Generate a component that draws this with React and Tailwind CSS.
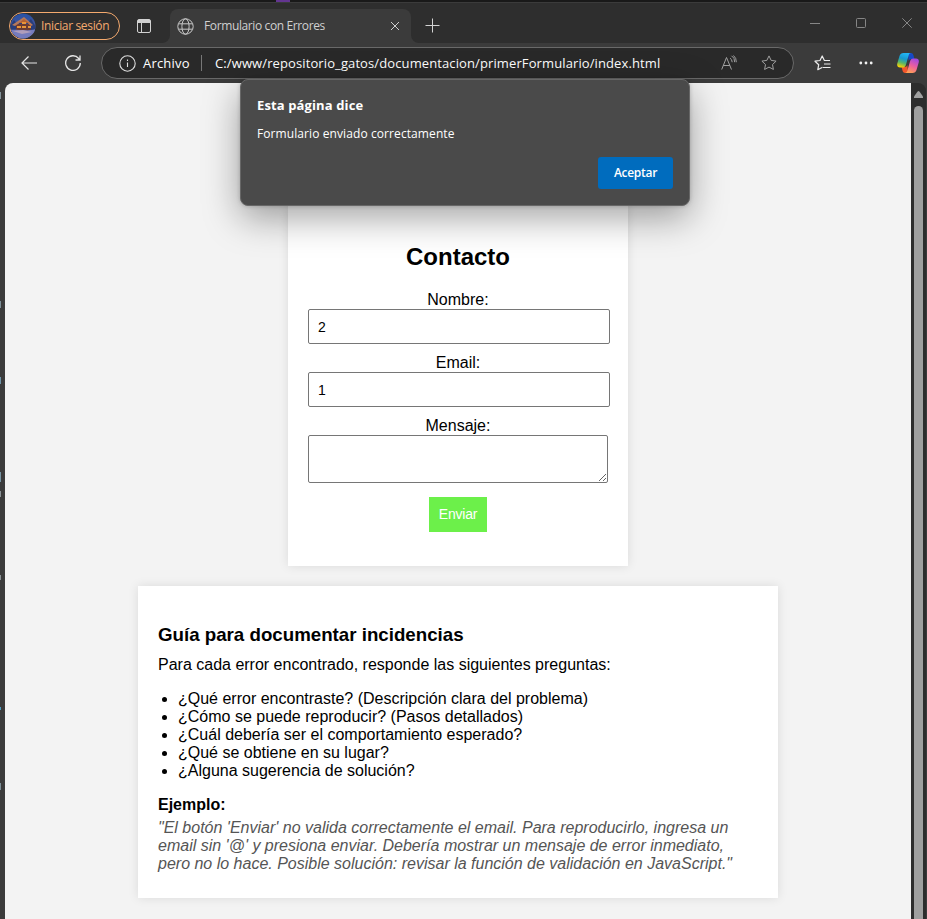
const ui = "font-['Open_Sans','Noto_Sans',sans-serif]";

function Avatar() {
  return (
    <svg viewBox="0 0 26 26" className="h-[26px] w-[26px] shrink-0">
      <defs>
        <clipPath id="av"><circle cx="13" cy="13" r="12.5" /></clipPath>
        <linearGradient id="sky" x1="0" y1="0" x2="0" y2="1">
          <stop offset="0" stopColor="#2451a8" />
          <stop offset="0.55" stopColor="#4a5696" />
          <stop offset="0.7" stopColor="#8287ba" />
          <stop offset="1" stopColor="#595faa" />
        </linearGradient>
      </defs>
      <g clipPath="url(#av)">
        <rect width="26" height="26" fill="url(#sky)" />
        <path d="M0 13 4 7l4 5 3-6 5 5 5-5 5 8v5H0z" fill="#283d7b" />
        <path d="M6 11h15v7H6z" fill="#6a3a34" />
        <path d="M2 12 14 4l9 8-2 1-7-6-9 6z" fill="#b5785c" />
        <path d="m9 10 5-4 5 4z" fill="#b8612f" />
        <path d="M7 13h4v2H7zM12 9h4v2h-4zM12 13h4v2h-4zM18 13h3v2h-3z" fill="#e8953b" />
        <path d="M0 17c7-1 15 2 26-1v10H0z" fill="#757bbd" />
        <path d="m3 18 10-1 9 2-10 2z" fill="#b09dbb" />
      </g>
    </svg>
  );
}

function Copilot() {
  return (
    <svg viewBox="0 0 22 20" className="h-5 w-[22px]">
      <defs>
        <linearGradient id="cl" x1="0.6" y1="0" x2="0.3" y2="1">
          <stop offset="0" stopColor="#23b7f5" />
          <stop offset="0.4" stopColor="#1799cf" />
          <stop offset="0.68" stopColor="#55b56a" />
          <stop offset="1" stopColor="#ffd400" />
        </linearGradient>
        <linearGradient id="cr" x1="0.7" y1="0" x2="0.3" y2="1">
          <stop offset="0" stopColor="#a248e2" />
          <stop offset="0.5" stopColor="#ed609c" />
          <stop offset="1" stopColor="#ffa253" />
        </linearGradient>
      </defs>
      <path d="M11 0h3c1.6 0 2.1 1 2.5 2.4L17.5 6h-3.2c-1.6 0-2.3.7-2.7 2z" fill="#1749c6" />
      <path d="M11 20H8.2c-1.7 0-2.3-1-2.7-2.4L4.5 14h3.2c1.5 0 2.3-.7 2.7-2z" fill="#f2562b" />
      <path d="M6.4 0H14c-1.3 0-1.9.9-2.3 2.2L9 11.4C8.500 13.400 7.500 14.500 5.700 14.500H3C.7 14.500-.3 12.900.3 10.600L2.500 3C3.100 1 4.400 0 6.400 0z" fill="url(#cl)" />
      <path d="M15.600 20H8c1.300 0 1.900-.9 2.300-2.200L13 8.600c.5-2 1.500-3.100 3.300-3.100H19c2.300 0 3.300 1.600 2.700 3.900L19.500 17c-.6 2-1.900 3-3.900 3z" fill="url(#cr)" />
    </svg>
  );
}

const starPath = "M8 .9l2.150 4.500 4.950.7-3.600 3.450.9 4.900L8 12.100l-4.400 2.350.9-4.900L.9 6.100l4.950-.7z";

function TabBar() {
  return (
    <div className="flex h-10 shrink-0 items-start bg-[#2e2e2e]">
      <div className="ml-[9px] mt-[9px] flex h-7 w-[111px] items-center rounded-full border border-[#f5aa6e]">
        <Avatar />
        <span className="ml-[5px] whitespace-nowrap text-[12px] tracking-[-0.34px] text-[#f5aa6e]">Iniciar sesión</span>
      </div>
      <svg viewBox="0 0 14 14" className="ml-[17px] mt-4 h-[14px] w-[14px]" fill="none" stroke="#d2d2d2">
        <rect x="0.5" y="0.5" width="13" height="13" rx="1.500" />
        <path d="M1 1.500h12M1 3.500h12M1 2.500h12M4.500 4v9" />
      </svg>
      <svg viewBox="0 0 8 8" className="ml-[11px] h-2 w-2 self-end"><path d="M8 0v8H0a8 8 0 0 0 8-8z" fill="#3b3b3b" /></svg>
      <div className="flex h-[34px] w-[241px] items-center self-end rounded-t-lg bg-[#3b3b3b] pl-[7px]">
        <svg viewBox="0 0 17 17" className="h-[17px] w-[17px]" fill="none" stroke="#c9c9c9">
          <circle cx="8.500" cy="8.500" r="7.700" />
          <ellipse cx="8.500" cy="8.500" rx="3.600" ry="7.700" />
          <path d="M1.500 5.800h14M1.500 11.200h14" />
        </svg>
        <span className="ml-[10px] whitespace-nowrap text-[12px] tracking-[-0.38px] text-[#d0d0d0]">Formulario con Errores</span>
        <svg viewBox="0 0 10 10" className="ml-auto mr-[11px] h-[10px] w-[10px]" stroke="#cfcfcf"><path d="m1 1 8 8m0-8L1 9" /></svg>
      </div>
      <svg viewBox="0 0 8 8" className="h-2 w-2 self-end"><path d="M0 0v8h8a8 8 0 0 1-8-8z" fill="#3b3b3b" /></svg>
      <svg viewBox="0 0 15 15" className="ml-[6px] mt-[15px] h-[15px] w-[15px]" stroke="#d3d3d3"><path d="M7.500.5v14M.5 7.500h14" /></svg>
      <div className="ml-auto mr-[15px] mt-[15px] flex items-center gap-9 text-[#868686]">
        <svg viewBox="0 0 10 10" className="h-[10px] w-[10px]" stroke="currentColor"><path d="M0 5.500h10" /></svg>
        <svg viewBox="0 0 10 10" className="h-[10px] w-[10px]" stroke="currentColor" fill="none"><rect x=".5" y=".5" width="9" height="9" rx="1" /></svg>
        <svg viewBox="0 0 10 10" className="h-[10px] w-[10px]" stroke="currentColor"><path d="m.3.3 9.400 9.400m0-9.400L.3 9.700" /></svg>
      </div>
    </div>
  );
}

function Toolbar() {
  return (
    <div className="flex h-10 shrink-0 items-center bg-[#3b3b3b]">
      <svg viewBox="0 0 16 14" className="ml-[21px] h-[14px] w-4" fill="none" stroke="#e5e5e5" strokeWidth="1.200"><path d="M7.500.5 1 7l6.500 6.500M1 7h15" /></svg>
      <svg viewBox="0 0 16 16" className="ml-7 h-4 w-4" fill="none" stroke="#e5e5e5" strokeWidth="1.300"><path d="M15.300 8A7.300 7.300 0 1 1 13.700 3.500L15 5M15 .5V5h-4.500" /></svg>
      <div className="ml-5 flex h-8 w-[693px] items-center rounded-full border border-[#696969] bg-[#292929] pl-[17px] pr-4">
        <svg viewBox="0 0 17 17" className="h-[17px] w-[17px]" fill="none" stroke="#dedede" strokeWidth="1.100"><circle cx="8.500" cy="8.500" r="7.700" /><path d="M8.500 7.500v4.500M8.500 4.500v1.500" /></svg>
        <span className="ml-[7px] w-[47px] whitespace-nowrap pt-px text-[13px] tracking-[0.2px] text-white">Archivo</span>
        <span className="ml-[11px] h-4 w-px bg-[#777]" />
        <span className="ml-[13px] whitespace-nowrap pt-px text-[13px] tracking-[0.11px] text-white">C:/www/repositorio_gatos/documentacion/primerFormulario/index.html</span>
        <svg viewBox="0 0 17 15" className="mb-0.5 ml-auto h-[15px] w-[17px]" fill="none" stroke="#a0a0a0">
          <path d="m.7 14.500 4.800-12 5 12M2.200 10.500h6.700M9 3.200q2 1 2.200 4M10.500.8q3.300 1.700 3.200 6.400M12.500.5q3 2.500 2.800 6.700" />
        </svg>
        <svg viewBox="0 0 16 16" className="ml-[23px] h-4 w-4" fill="none" stroke="#a0a0a0"><path d={starPath} strokeLinejoin="round" /></svg>
      </div>
      <svg viewBox="0 0 17 16" className="ml-5 h-4 w-[17px]" fill="none" stroke="#ececec" strokeWidth="1.200" strokeLinejoin="round">
        <path d="M8.500 12.200 3.800 14.700l.9-5L1 6.200l5-.7L8.200 1l2.200 4.500H16M10 9h6.500M9 12.500h7.500" />
      </svg>
      <svg viewBox="0 0 14 4" className="ml-7 h-1 w-[14px]" fill="#f1f1f1"><circle cx="1.800" cy="2" r="1.400" /><circle cx="7" cy="2" r="1.400" /><circle cx="12.200" cy="2" r="1.400" /></svg>
      <div className="ml-6"><Copilot /></div>
    </div>
  );
}

function Field({ label, value }) {
  return (
    <label className="mb-[9px] block">
      <span className="block h-[19px] text-center leading-[20px]">{label}</span>
      <input defaultValue={value} className="block h-[35px] w-[302px] rounded-[2px] border border-[#767676] bg-white px-[9px] text-[14px] text-black outline-none" />
    </label>
  );
}

function ContactForm() {
  return (
    <form className="h-[363px] w-[340px] shrink-0 bg-white px-5 pt-10 shadow-[0_0_10px_rgba(0,0,0,0.1)]">
      <h2 className="mb-5 text-center text-[24px] font-bold leading-[27px]">Contacto</h2>
      <Field label="Nombre:" value="2" />
      <Field label="Email:" value="1" />
      <label className="block">
        <span className="block h-[19px] text-center leading-[20px]">Mensaje:</span>
        <textarea className="block h-12 w-[300px] resize rounded-[2px] border border-[#767676] bg-white p-2 outline-none" />
      </label>
      <button type="button" className="mx-auto mt-[14px] block h-[35px] w-[58px] bg-[#6cf04a] pb-px text-[14px] tracking-[-0.2px] text-white">Enviar</button>
    </form>
  );
}

function Guide() {
  return (
    <section className="mt-5 h-[312px] w-[640px] shrink-0 bg-white px-5 pt-[38px] shadow-[0_0_10px_rgba(0,0,0,0.1)]">
      <h3 className="text-[18.72px] font-bold leading-[21px]">Guía para documentar incidencias</h3>
      <p className="mt-[11px]">Para cada error encontrado, responde las siguientes preguntas:</p>
      <ul className="mt-4 list-disc pl-5">
        <li>¿Qué error encontraste? (Descripción clara del problema)</li>
        <li>¿Cómo se puede reproducir? (Pasos detallados)</li>
        <li>¿Cuál debería ser el comportamiento esperado?</li>
        <li>¿Qué se obtiene en su lugar?</li>
        <li>¿Alguna sugerencia de solución?</li>
      </ul>
      <h4 className="mt-4 font-bold">Ejemplo:</h4>
      <p className="mt-[5px] italic text-[#555]">"El botón 'Enviar' no valida correctamente el email. Para reproducirlo, ingresa un email sin '@' y presiona enviar. Debería mostrar un mensaje de error inmediato, pero no lo hace. Posible solución: revisar la función de validación en JavaScript."</p>
    </section>
  );
}

function Dialog() {
  return (
    <div role="dialog" className={`absolute left-[240px] top-[79px] flex h-[127px] w-[450px] flex-col rounded-lg border border-[#676767] bg-[#4a4a4a] px-4 pt-4 text-white shadow-[0_12px_36px_rgba(0,0,0,0.36),0_0_4px_rgba(0,0,0,0.2)] ${ui}`}>
      <h1 className="whitespace-nowrap text-[13px] font-bold leading-[18px] tracking-[0.12px]">Esta página dice</h1>
      <p className="mt-[11px] whitespace-nowrap text-[12px] leading-[18px] tracking-[0.09px]">Formulario enviado correctamente</p>
      <button type="button" className="mt-[14px] h-8 w-[75px] self-end rounded-[3px] bg-[#006cbe] text-[12px] font-semibold tracking-[-0.3px]">Aceptar</button>
    </div>
  );
}

export default function App() {
  return (
    <div className="relative flex h-[919px] w-[927px] flex-col overflow-hidden bg-[#3b3b3b]">
      <div className="flex h-[3px] shrink-0 border-b border-[#3b3b3b] bg-[#191919] pl-[276px]"><span className="h-[2px] w-[14px] bg-[#633591]" /></div>
      <div className={ui}>
        <TabBar />
        <Toolbar />
      </div>
      <div className="flex min-h-0 flex-1">
        {/* Sliver of the window behind, visible along the left edge */}
        <div className="flex w-[5px] shrink-0 flex-col">
          <span className="mt-[9px] h-[7px] w-px bg-[#85949b]" />
          <span className="mt-[202px] h-[7px] w-px bg-[#7d8f98]" />
          <span className="mt-[69px] h-[7px] w-px bg-[#6f94a8]" />
          <span className="mt-[88px] h-[10px] w-px bg-[#7794a3]" />
          <span className="mt-[9px] h-[6px] w-px bg-[#8b9296]" />
          <span className="mt-[78px] h-[5px] w-px bg-[#8b9296]" />
          <span className="mt-[127px] h-[3px] w-px bg-[#4f9cc0]" />
          <span className="mt-[73px] h-[7px] w-px bg-[#7d8f98]" />
        </div>
        <main className="flex w-[906px] shrink-0 flex-col items-center overflow-hidden rounded-tl-lg bg-[#f3f3f3] pt-[120px] font-['Liberation_Sans',Arial,sans-serif] text-[16px] leading-[18px] text-black">
          <ContactForm />
          <Guide />
        </main>
        <div className="flex w-[15px] flex-col items-center rounded-tr-lg bg-[#2d2d2d] pt-2">
          <svg viewBox="0 0 9 7" className="h-[7px] w-[9px]" fill="#a0a0a0"><path d="M3.600.6Q4.500-.4 5.400.6L9 5.500V7H0V5.500z" /></svg>
          <div className="mt-2 w-[9px] flex-1 rounded-t-full bg-[#9f9f9f]" />
        </div>
      </div>
      <Dialog />
    </div>
  );
}
